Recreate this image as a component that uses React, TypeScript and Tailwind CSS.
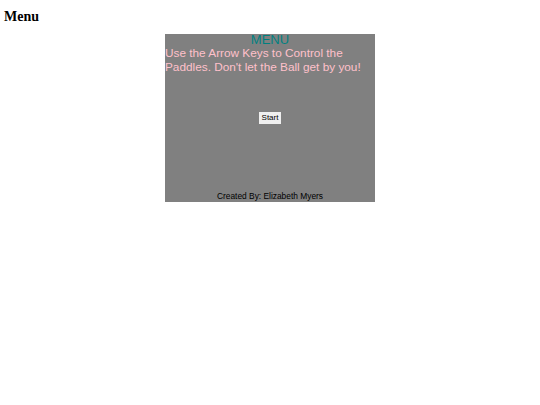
export default function App() {
  return (
    <div className="min-h-[405px] bg-white font-['Liberation_Serif',serif]">
      <h3 className="px-1 pt-[9px] text-[14px] font-bold leading-[16px] text-black">Menu</h3>
      <div className="mx-auto mt-[9px] flex h-[168px] w-[210px] flex-col bg-[#808080] font-['Liberation_Sans',Arial,sans-serif]">
        <div className="text-center text-[13px] leading-[12px] text-[#008080]">MENU</div>
        <p className="mt-px text-[11.8px] leading-[13.5px] text-[#ffc0cb]">
          Use the Arrow Keys to Control the Paddles. Don't let the Ball get by you!
        </p>
        <div className="mt-[38px] flex justify-center">
          <button className="h-[12px] bg-[#efefef] px-[3px] text-[8px] leading-[12px] text-black">Start</button>
        </div>
        <div className="mt-auto text-center text-[8.4px] leading-[11px] text-black">Created By: Elizabeth Myers</div>
      </div>
    </div>
  );
}
